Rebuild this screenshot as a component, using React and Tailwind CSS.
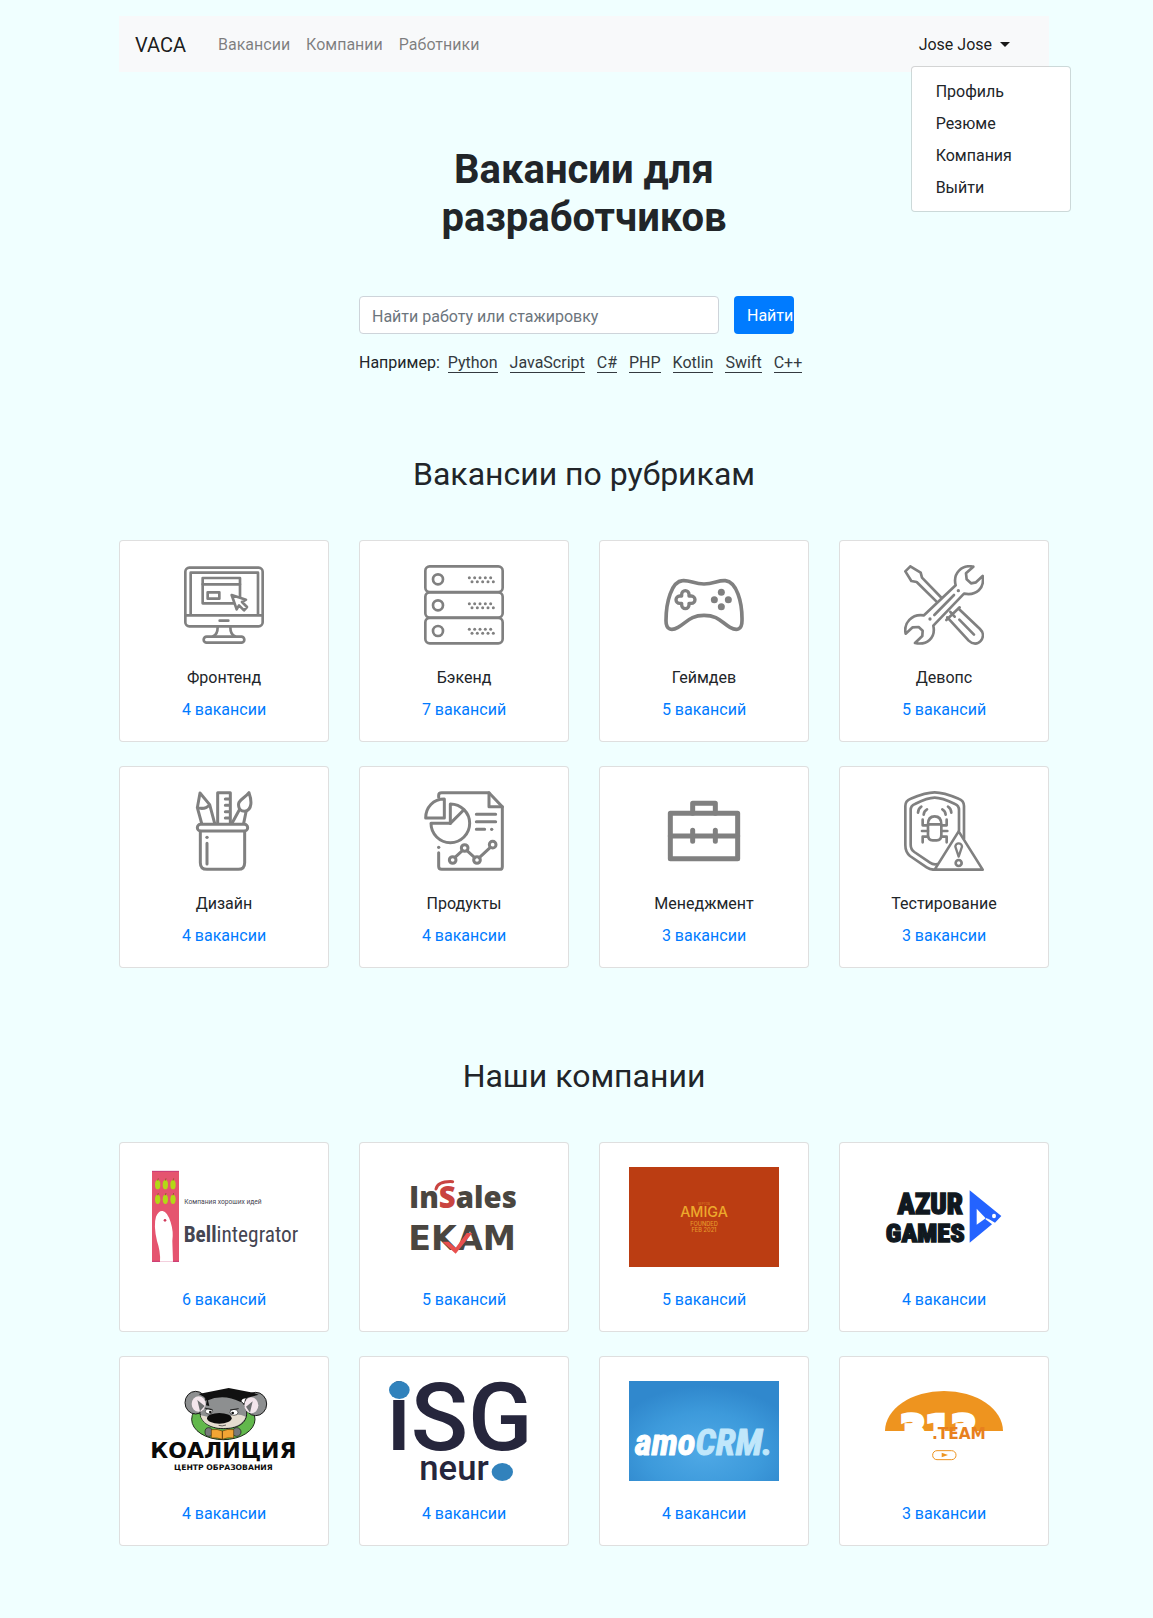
const navLinks = ["Вакансии", "Компании", "Работники"];
const menuItems = ["Профиль", "Резюме", "Компания", "Выйти"];
const skills = ["Python", "JavaScript", "C#", "PHP", "Kotlin", "Swift", "C++"];

function Icon({ box, width = 8, children }) {
  return (
    <svg
      viewBox={box}
      className="block size-20"
      fill="none"
      stroke="#808080"
      strokeWidth={width}
      strokeLinecap="round"
      strokeLinejoin="round"
      aria-hidden="true"
    >
      {children}
    </svg>
  );
}

function FrontendIcon() {
  return (
    <Icon box="222 105 240 240">
      <rect x="226" y="113" width="232" height="176" rx="12" />
      <path d="M242 256V128H444V256M225 256H459" />
      <rect x="278" y="144" width="112" height="76" />
      <path d="M278 163H390M329 272H355" />
      <rect x="293" y="187" width="35" height="19" />
      <path d="M365 195L408 209L396 216L411 231L402 241L387 226L380 238Z" fill="#fff" />
      <path d="M323 291Q323 314 309 319M361 291Q361 314 375 319" />
      <rect x="281" y="320" width="122" height="18" rx="9" />
    </Icon>
  );
}

function BackendIcon() {
  return (
    <Icon box="942 105 240 240">
      {[109, 187, 264].map((y) => (
        <g key={y}>
          <rect x="946" y={y} width="232" height={y === 109 ? 77 : 76} rx="13" />
          <circle cx="984" cy={y + 39} r="15" />
          {[0, 1, 2, 3, 4].map((i) => (
            <g key={i} fill="#808080" stroke="none">
              <circle cx={1078 + i * 16} cy={y + 34} r="4.5" />
              <circle cx={1086 + i * 16} cy={y + 46} r="4.5" />
            </g>
          ))}
        </g>
      ))}
    </Icon>
  );
}

function GamepadIcon() {
  return (
    <Icon box="222 105 240 240" width={11}>
      <path d="M278 152C300 150 312 162 342 162C372 162 385 150 406 152C440 156 457 215 456 272C456 300 440 303 420 292C395 278 385 256 342 256C300 256 290 278 264 292C245 303 228 300 228 272C228 215 245 154 278 152Z" />
      <path strokeWidth="10" d="M275 198V193a11 11 0 0 1 22 0V198H304a11 11 0 0 1 0 22H297V225a11 11 0 0 1-22 0V220H269a11 11 0 0 1 0-22Z" />
      <g fill="#808080" stroke="none">
        <circle cx="394" cy="187" r="10.5" />
        <circle cx="373" cy="209" r="10.5" />
        <circle cx="415" cy="209" r="10.5" />
        <circle cx="394" cy="230" r="10.5" />
      </g>
    </Icon>
  );
}

function ToolsIcon() {
  return (
    <Icon box="942 105 240 240">
      <path d="M1055 204L996 143L992 128L961 109L946 124L964 153L980 156L1042 217" />
      <path d="M1072 262L1136 332C1148 344 1164 343 1172 333C1182 321 1180 307 1170 297L1106 236" />
      <path d="M1069 270L1109 232M1108 269L1152 314M1081 246L1094 260" />
      <path
        fill="#fff"
        d="M1002 256L1097 166C1088 130 1115 103 1150 110L1128 130L1130 148L1143 160L1158 157L1178 138C1184 175 1160 198 1122 191L1030 287C1038 325 1010 346 975 339L997 318L998 302L986 291L968 292L947 311C940 280 965 250 1002 256Z"
      />
      <path d="M1033 255L1092 195" />
      <g fill="#808080" stroke="none">
        <circle cx="1020" cy="267" r="5" />
        <circle cx="1105" cy="182" r="5" />
      </g>
    </Icon>
  );
}

function DesignIcon() {
  return (
    <Icon box="222 93 240 240" width={9}>
      <path d="M275 190L262 143L270 99L299 134L314 190M262 143Q285 150 299 134" />
      <path d="M323 190V98H361V190M346 117H361M346 136H361M346 155H361M346 174H361" />
      <path d="M366 190L389 148M408 156L401 190" />
      <path d="M389 148C376 120 402 118 417 98C425 120 428 150 404 154Q396 154 389 148Z" />
      <rect x="262" y="193" width="151" height="20" rx="10" />
      <path d="M271 214V308Q271 328 291 328H385Q404 328 404 308V214M291 250V312" />
      <circle cx="291" cy="232" r="5" fill="#808080" stroke="none" />
    </Icon>
  );
}

function ProductsIcon() {
  return (
    <Icon box="942 93 240 240" width={9}>
      <path d="M986 112V106Q986 98 995 98H1137L1177 140V320Q1177 328 1169 328H995Q986 328 986 319V278" />
      <path d="M1137 98V140H1177" />
      <path fill="#fff" d="M1003 117V174H947C947 142 970 117 1003 117Z" />
      <path fill="#fff" d="M963 190A58 58 0 1 0 1021 132V190Z" />
      <path d="M1021 190L1061 150M1099 163H1157M1099 185H1157M1099 208H1124" />
      <path d="M1035 292L1057 272M1071 272L1094 293M1108 293L1141 262" />
      <circle cx="1028" cy="300" r="10" />
      <circle cx="1064" cy="264" r="10" />
      <circle cx="1101" cy="300" r="10" />
      <circle cx="1148" cy="254" r="10" />
      <g fill="#808080" stroke="none">
        <circle cx="1145" cy="208" r="5" />
        <circle cx="986" cy="262" r="5" />
      </g>
    </Icon>
  );
}

function BriefcaseIcon() {
  return (
    <Icon box="222 93 240 240" width={15}>
      <rect x="241" y="160" width="202" height="136" />
      <path d="M308 160V130H376V160M241 228H443M308 211V244M376 211V244" />
    </Icon>
  );
}

function TestingIcon() {
  return (
    <Icon box="942 93 240 240">
      <path d="M1122 236V138Q1122 122 1106 116Q1060 97 1034 97Q1008 97 962 116Q946 122 946 138V255Q946 276 960 288L1010 322Q1022 330 1034 329" />
      <path d="M1107 212V150Q1107 137 1095 132Q1055 113 1034 113Q1013 113 975 132Q962 137 962 150V254Q962 268 973 276L1020 308Q1030 315 1042 312" />
      <path fill="#fff" d="M1106 214L1178 329H1034Z" />
      <path strokeWidth="7" d="M1106 290L1096 260A10 10 0 1 1 1116 260Z" />
      <circle cx="1106" cy="309" r="9" />
      <path d="M1014 193Q1014 169 1034 169Q1054 169 1054 193V225Q1054 241 1040 241H1028Q1014 241 1014 225ZM1014 193H1054" />
      <path d="M1014 196H998V179M1014 213H996M1014 230H998V247M1054 196H1070V179M1054 213H1072M1054 230H1070V247" />
      <path d="M984 158Q985 145 994 140M1001 164Q1002 153 1011 148M1084 158Q1083 145 1074 140M1067 164Q1066 153 1057 148" />
    </Icon>
  );
}

function Logo({ box, label, children }) {
  return (
    <svg viewBox={box} className="block h-[100px] w-[150px]" role="img" aria-label={label}>
      {children}
    </svg>
  );
}

function BellLogo() {
  return (
    <Logo box="117 96 450 300" label="Bell Integrator">
      <rect x="126" y="108" width="81" height="273" fill="#e5546f" />
      <path d="M126 109H207M126 379H207" stroke="#c83c78" strokeWidth="3" />
      {[149, 193].map((y) =>
        [143, 166, 189].map((x) => (
          <g key={`${x}-${y}`}>
            <ellipse cx={x} cy={y} rx="8" ry="14" fill="#b4d816" />
            <path d={`M${x} ${y - 12}l2 -7`} stroke="#7a5a10" strokeWidth="2" />
          </g>
        ))
      )}
      <path d="M150 380Q152 350 141 318Q130 270 138 245Q146 226 158 228Q172 230 182 262Q191 290 187 318L189 380Z" fill="#fff" />
      <circle cx="165" cy="256" r="4" fill="#d03a5c" />
      <g fill="#454552">
        <text x="223" y="206" fontSize="20" fontFamily="Roboto, sans-serif">Компания хороших идей</text>
        <text x="221" y="322" fontSize="64" fontFamily="'Roboto Condensed', Roboto, sans-serif">
          <tspan fontWeight="700">Bell</tspan>integrator
        </text>
      </g>
    </Logo>
  );
}

function InsalesLogo() {
  return (
    <Logo box="837 96 450 300" label="InSales EKAM">
      <text x="897" y="218" fontSize="88" fontWeight="800" fill="#4a4640" fontFamily="'Open Sans', sans-serif">
        In<tspan fill="#c94440">S</tspan>ales
      </text>
      <path d="M978 162Q984 138 1028 140" fill="none" stroke="#c94440" strokeWidth="9" strokeLinecap="round" />
      <text x="895" y="345" fontSize="100" fontWeight="700" fill="#4a4640" fontFamily="'DejaVu Sans', sans-serif">
        EKAM
      </text>
      <path d="M997 320H1016L1037 338L1070 294H1087L1037 356Z" fill="#e8504e" />
    </Logo>
  );
}

function AmigaLogo() {
  return (
    <Logo box="117 96 450 300" label="Amiga">
      <rect x="117" y="96" width="450" height="300" fill="#bb3d12" />
      <g textAnchor="middle" fontFamily="Inter, sans-serif" fontWeight="500">
        <text x="342" y="210" fontSize="9" fill="#d97a22">ВЕРТОВ</text>
        <text x="342" y="247" fontSize="43" fill="#eda92c">AMIGA</text>
        <text x="342" y="273" fontSize="17" fill="#e59a2c">FOUNDED</text>
        <text x="342" y="290" fontSize="17" fill="#e59a2c">FEB 2021</text>
      </g>
    </Logo>
  );
}

function AzurLogo() {
  return (
    <Logo box="837 96 450 300" label="Azur Games">
      <g fill="#101820" stroke="#101820" strokeWidth="4" fontWeight="900" textAnchor="end" fontFamily="'Roboto Condensed', Roboto, sans-serif">
        <text x="1119" y="236" fontSize="86">AZUR</text>
        <text x="1124" y="321" fontSize="79">GAMES</text>
      </g>
      <path d="M1139 166L1234 243L1215 263L1192 250L1206 268L1139 323Z" fill="#2463ff" />
      <path d="M1160 221L1187 250L1160 269Z" fill="#fff" />
      <path d="M1188 251L1206 264" stroke="#fff" strokeWidth="5" />
      <ellipse cx="1212" cy="243" rx="6" ry="7" fill="#fff" />
    </Logo>
  );
}

function KoalaLogo() {
  return (
    <Logo box="117 93 450 300" label="Коалиция">
      <ellipse cx="340" cy="208" rx="95" ry="61" fill="#62b84c" stroke="#1c2a18" strokeWidth="3" />
      <g stroke="#1a1a1a" strokeWidth="3">
        <ellipse cx="257" cy="158" rx="32" ry="34" fill="#8d8f90" />
        <ellipse cx="437" cy="162" rx="33" ry="35" fill="#8d8f90" />
        <path d="M270 178C272 150 300 138 338 138C380 138 408 156 410 186C412 222 380 236 340 236C298 236 266 214 270 178Z" fill="#8d8f90" />
      </g>
      <ellipse cx="266" cy="162" rx="21" ry="23" fill="#f3e6ec" />
      <ellipse cx="424" cy="166" rx="21" ry="24" fill="#f3e6ec" />
      <path d="M262 150L284 168L270 184ZM428 154L408 170L420 188Z" fill="#6d6f70" />
      <path d="M272 196C276 218 300 234 340 234C378 234 400 220 407 200C390 192 370 190 358 200L300 202Z" fill="#e5ddd0" />
      <path d="M266 132L356 114L430 128L446 134L398 147L392 156Q340 130 290 152L284 142Z" fill="#111" />
      <path d="M292 143L288 166L298 168Z" fill="#111" />
      <ellipse cx="297" cy="184" rx="11" ry="8" fill="#fff" stroke="#222" strokeWidth="2" />
      <ellipse cx="372" cy="187" rx="12" ry="9" fill="#fff" stroke="#222" strokeWidth="2" />
      <circle cx="301" cy="186" r="4" fill="#111" />
      <circle cx="368" cy="189" r="4" fill="#111" />
      <path d="M284 174L308 180M386 176L360 180" stroke="#222" strokeWidth="3" />
      <ellipse cx="328" cy="205" rx="37" ry="16" fill="#0c0c0c" />
      <path d="M326 226Q336 230 348 225" fill="none" stroke="#222" strokeWidth="2" />
      <ellipse cx="296" cy="246" rx="11" ry="13" fill="#77797a" stroke="#1a1a1a" strokeWidth="2" />
      <ellipse cx="380" cy="246" rx="13" ry="13" fill="#77797a" stroke="#1a1a1a" strokeWidth="2" />
      <path d="M304 239Q322 236 337 243Q352 236 371 239V264Q352 261 337 268Q322 262 304 264Z" fill="#f2a534" stroke="#5d3b0c" strokeWidth="2" />
      <path d="M337 243V268" stroke="#5d3b0c" strokeWidth="3" />
      <g fill="#0a0a0a" textAnchor="middle" fontFamily="'DejaVu Sans', sans-serif">
        <text x="340" y="325" fontSize="66" fontWeight="700">КОАЛИЦИЯ</text>
        <text x="340" y="359" fontSize="23" fontWeight="700">ЦЕНТР ОБРАЗОВАНИЯ</text>
      </g>
    </Logo>
  );
}

function IsgLogo() {
  return (
    <Logo box="837 93 450 300" label="iSG neuro">
      <g fill="#26263c" fontFamily="Roboto, sans-serif" fontWeight="500">
        <text x="830" y="300" fontSize="284">iSG</text>
        <text x="928" y="390" fontSize="104">neur</text>
      </g>
      <ellipse cx="868" cy="120" rx="31" ry="27" fill="#3182bc" />
      <ellipse cx="1177" cy="366" rx="32" ry="27" fill="#3182bc" />
    </Logo>
  );
}

function AmoLogo() {
  return (
    <Logo box="117 93 450 300" label="amoCRM">
      <defs>
        <radialGradient id="amo-sky" cx="0.5" cy="0.7" r="0.65">
          <stop offset="0" stopColor="#4fa9e6" />
          <stop offset="0.6" stopColor="#3d9adb" />
          <stop offset="1" stopColor="#3088cd" />
        </radialGradient>
      </defs>
      <rect x="117" y="93" width="450" height="300" fill="url(#amo-sky)" />
      <g fontFamily="'Roboto Condensed', Roboto, sans-serif" fontStyle="italic" fontWeight="700" strokeWidth="3" strokeLinejoin="round">
        <text x="134" y="316" fontSize="110" fill="#fff" stroke="#fff">
          amo<tspan fill="#c0e7fb" stroke="#c0e7fb">CRM.</tspan>
        </text>
      </g>
    </Logo>
  );
}

function TeamLogo() {
  return (
    <Logo box="837 93 450 300" label="313.team">
      <path d="M885 243A177 120 0 0 1 1239 243Z" fill="#ee941f" />
      <text x="930" y="277" fontSize="110" fontWeight="700" fill="#fff" stroke="#fff" strokeWidth="14" fontFamily="'DejaVu Sans', sans-serif">
        313
      </text>
      <text x="1026" y="268" fontSize="46" fontWeight="700" fill="#e8801e" fontFamily="'DejaVu Sans', sans-serif">
        .TEAM
      </text>
      <rect x="1028" y="302" width="70" height="27" rx="13" fill="#fff" stroke="#ee941f" strokeWidth="3" />
      <path d="M1055 308L1074 315L1055 322Z" fill="#ee941f" />
    </Logo>
  );
}

const categories = [
  { title: "Фронтенд", count: "4 вакансии", Art: FrontendIcon },
  { title: "Бэкенд", count: "7 вакансий", Art: BackendIcon },
  { title: "Геймдев", count: "5 вакансий", Art: GamepadIcon },
  { title: "Девопс", count: "5 вакансий", Art: ToolsIcon },
  { title: "Дизайн", count: "4 вакансии", Art: DesignIcon },
  { title: "Продукты", count: "4 вакансии", Art: ProductsIcon },
  { title: "Менеджмент", count: "3 вакансии", Art: BriefcaseIcon },
  { title: "Тестирование", count: "3 вакансии", Art: TestingIcon },
];

const companies = [
  { id: "bell", count: "6 вакансий", Art: BellLogo },
  { id: "insales", count: "5 вакансий", Art: InsalesLogo },
  { id: "amiga", count: "5 вакансий", Art: AmigaLogo },
  { id: "azur", count: "4 вакансии", Art: AzurLogo },
  { id: "koala", count: "4 вакансии", Art: KoalaLogo },
  { id: "isg", count: "4 вакансии", Art: IsgLogo },
  { id: "amo", count: "4 вакансии", Art: AmoLogo },
  { id: "team", count: "3 вакансии", Art: TeamLogo },
];

function Card({ title, count, Art }) {
  return (
    <article className="flex flex-col items-center rounded border border-black/[.125] bg-white px-5 pt-6 pb-[19px]">
      <Art />
      {title && <h3 className="mt-[21px] mb-2">{title}</h3>}
      <a href="#" className={title ? "text-[#007bff]" : "mt-[21px] text-[#007bff]"}>
        {count}
      </a>
    </article>
  );
}

function Section({ title, items, className }) {
  return (
    <section className={className}>
      <h2 className="text-center text-[32px] leading-[38px]">{title}</h2>
      <div className="mt-[47px] grid grid-cols-4 gap-x-[30px] gap-y-6">
        {items.map((item) => (
          <Card key={item.id ?? item.title} {...item} />
        ))}
      </div>
    </section>
  );
}

export default function App() {
  return (
    <div className="min-h-screen bg-[#f0ffff] pt-4 pb-[72px] pl-[15px] font-[Roboto,sans-serif] text-base text-[#212529]">
      <div className="mx-auto max-w-[930px]">
        <nav className="flex items-center bg-[#f8f9fa] px-4 pt-[9px] pb-[7px]">
          <a href="#" className="mr-6 py-1 text-xl leading-[30px] text-black/90">VACA</a>
          <div className="flex flex-1">
            {navLinks.map((label) => (
              <a key={label} href="#" className="p-2 text-black/50">{label}</a>
            ))}
          </div>
          <div className="relative mr-[15px]">
            <button type="button" aria-haspopup="true" aria-expanded="true" className="flex items-center gap-2 p-2 text-black/90">
              Jose Jose
              <span className="mb-0.5 border-x-[5px] border-t-[5px] border-x-transparent border-t-current" />
            </button>
            <div className="absolute top-full left-0 z-10 mt-px w-40 rounded border border-black/15 bg-white bg-clip-padding pt-[9px] pb-[7px]">
              {menuItems.map((label) => (
                <a key={label} href="#" className="block px-6 py-1">{label}</a>
              ))}
            </div>
          </div>
        </nav>

        <main>
          <h1 className="mx-auto mt-[74px] max-w-[450px] text-center text-[40px] leading-[48px] font-bold">
            Вакансии для разработчиков
          </h1>

          <div className="mx-auto mt-[54px] w-[450px]">
            <form className="flex gap-[15px]">
              <input
                type="search"
                aria-label="Поиск вакансий"
                placeholder="Найти работу или стажировку"
                className="h-[38px] w-[360px] rounded border border-[#ced4da] bg-white px-3 pt-0.5 placeholder:text-[#6c757d]"
              />
              <button type="button" className="h-[38px] w-[60px] rounded bg-[#007bff] pt-0.5 pl-[13px] text-left whitespace-nowrap text-white">
                Найти
              </button>
            </form>
            <p className="mt-[17px] flex gap-3 whitespace-nowrap">
              <span className="-mr-1">Например:</span>
              {skills.map((skill) => (
                <span key={skill}>
                  <a href="#" className="border-b border-[#343a40] text-[#343a40]">{skill}</a>
                </span>
              ))}
            </p>
          </div>

          <Section title="Вакансии по рубрикам" items={categories} className="mt-20" />
          <Section title="Наши компании" items={companies} className="mt-[89px]" />
        </main>
      </div>
    </div>
  );
}
